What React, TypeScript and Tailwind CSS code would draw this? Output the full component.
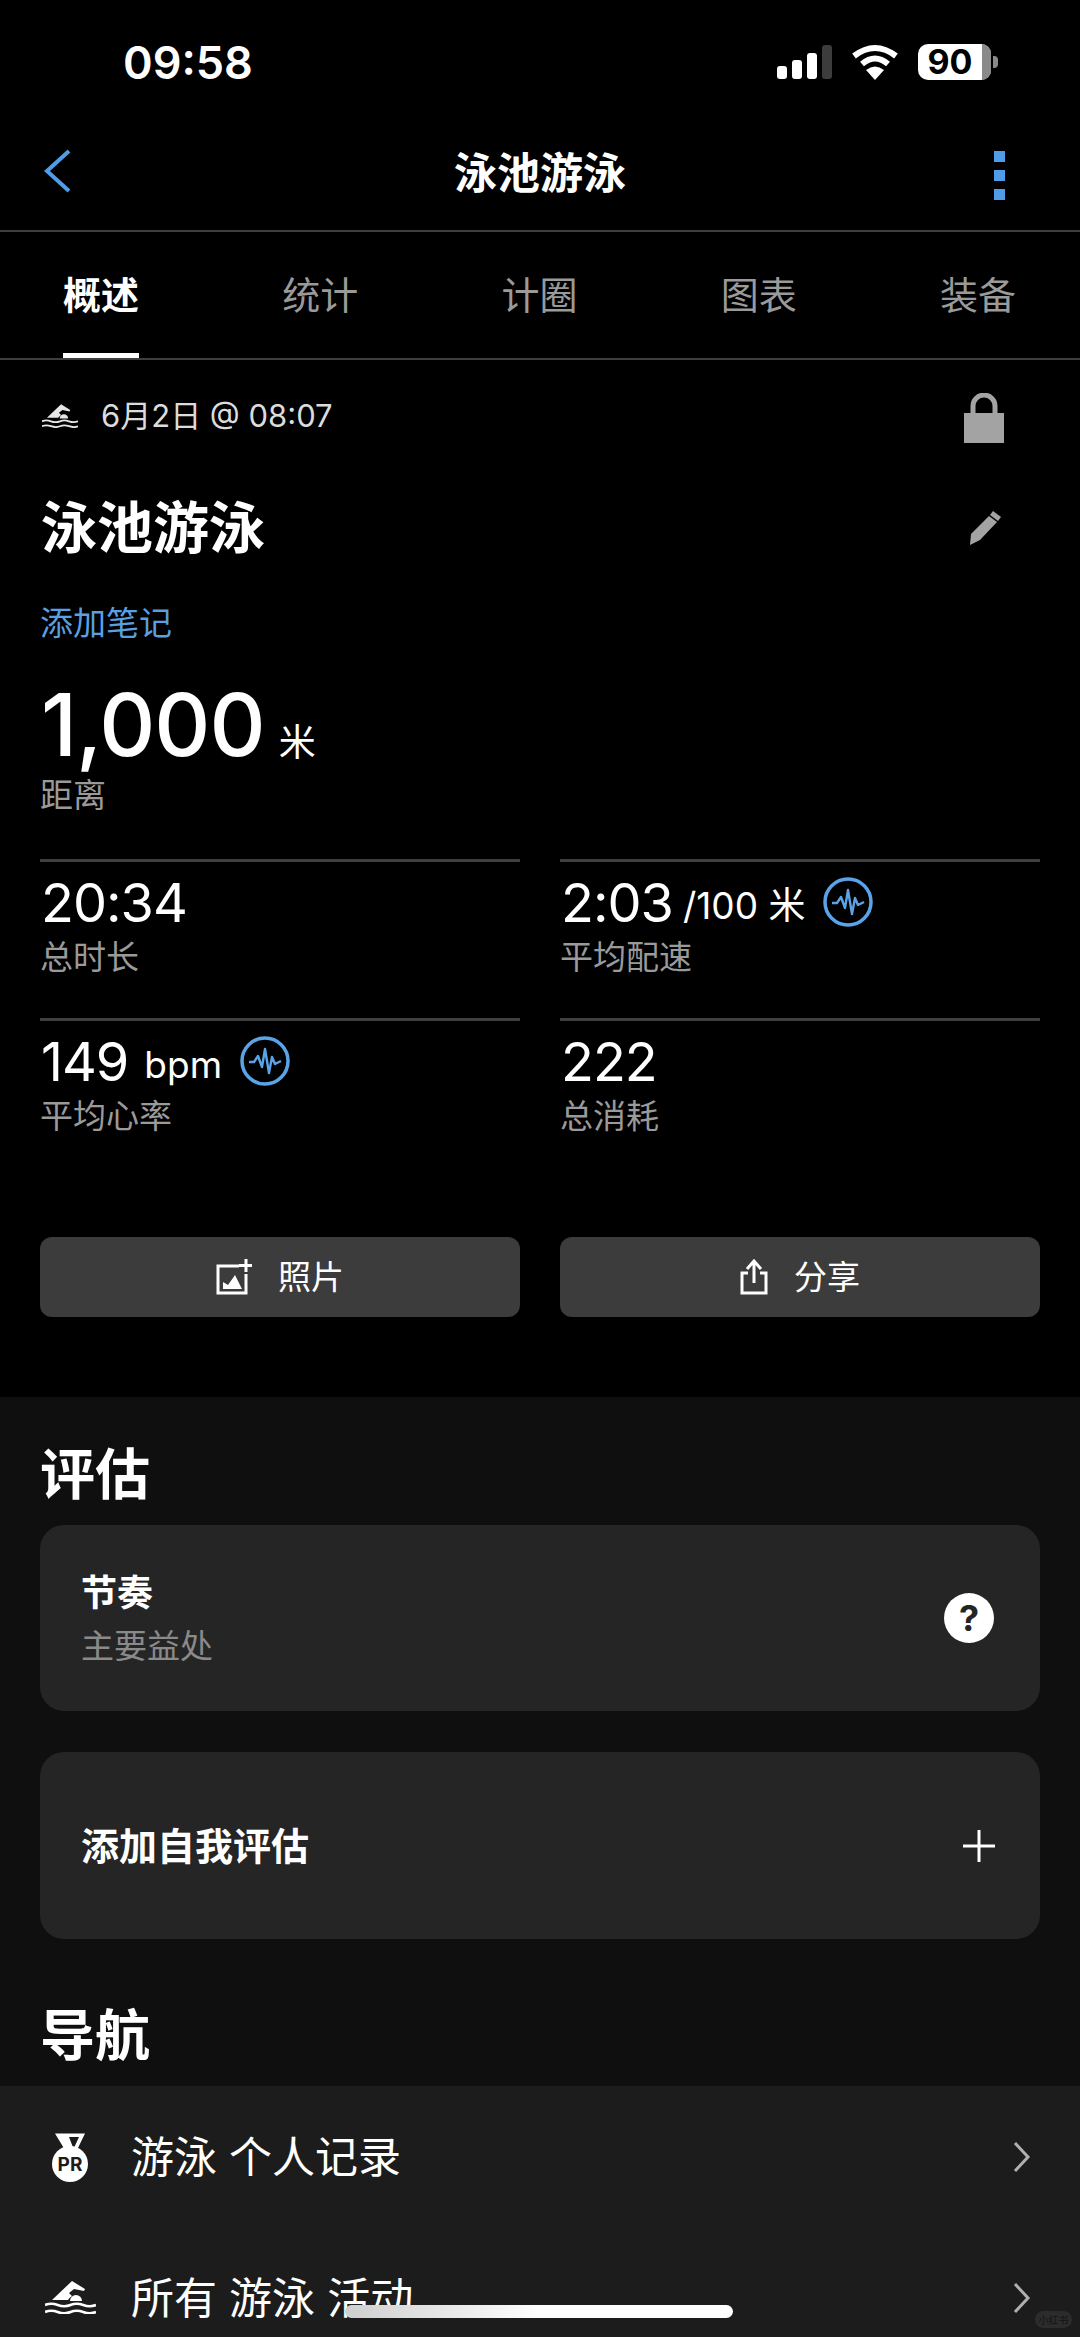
import { ReactNode } from "react"

const FONT = "font-['Inter','Noto_Sans_CJK_SC',sans-serif]"

function SwimIcon({ className }: { className: string }) {
    return (
        <svg viewBox="0 0 51 33" className={className} fill="white">
            <path d="M7 19 L27 0 L40 8 L39 10 L29 8 L24 12 L27 15 Q24 17 23 19 Z" />
            <path d="M25 20 a6 6 0 0 1 12 0 Z" />
            <path d="M0 24 q6 -2.5 12.75 0 t12.75 0 t12.75 0 t12.75 0 M0 31 q6 -2.5 12.75 0 t12.75 0 t12.75 0 t12.75 0" fill="none" stroke="white" strokeWidth="2.6" />
        </svg>
    )
}

function PulseIcon() {
    return (
        <svg viewBox="0 0 50 50" className="w-[50px] h-[50px] shrink-0" fill="none" stroke="#5ba3e8">
            <circle cx="25" cy="25" r="23" strokeWidth="3.5" />
            <path d="M9 26 L14 26 L18 20 L22 31 L25 13 L29 37 L32 21 L35 28 L41 25" strokeWidth="2.4" strokeLinejoin="round" />
        </svg>
    )
}

function Chevron() {
    return (
        <svg viewBox="0 0 20 32" className="w-[20px] h-[32px]" fill="none" stroke="#b0b0b0" strokeWidth="3">
            <path d="M3 2 L16 16 L3 30" />
        </svg>
    )
}

function Stat({ value, unit, unitGap, label, pulse }: { value: string; unit?: string; unitGap?: string; label: string; pulse?: boolean }) {
    return (
        <div className="h-[159px] border-t-[3px] border-[#3f3f3f] pt-[12px]">
            <div className="flex items-center h-[58px] pl-[1px]">
                <span className="text-[54px] leading-[58px] text-white tracking-[-1px]">{value}</span>
                {unit && <span className={`text-[37px] leading-[58px] text-white mt-[6px] ${unitGap ?? "ml-[10px]"}`}>{unit}</span>}
                {pulse && <span className="ml-[18px] -mt-[2px]"><PulseIcon /></span>}
            </div>
            <div className="text-[33px] leading-[40px] text-[#9a9a9a] mt-[5px]">{label}</div>
        </div>
    )
}

function ActionButton({ icon, label }: { icon: ReactNode; label: string }) {
    return (
        <div className="h-[80px] rounded-[12px] bg-[#3c3c3c] flex items-center justify-center gap-[26px] text-[33px] leading-none text-white">
            {icon}
            <span>{label}</span>
        </div>
    )
}

function NavRow({ icon, label }: { icon: ReactNode; label: string }) {
    return (
        <div className="h-[141px] flex items-center pr-[48px]">
            <div className="w-[131px] flex shrink-0">{icon}</div>
            <span className="flex-1 text-[43px] leading-[50px] text-white whitespace-pre">{label}</span>
            <Chevron />
        </div>
    )
}

export default function App() {
    const tabs = ["概述", "统计", "计圈", "图表", "装备"]

    return (
        <div className={`relative w-[1080px] h-[2337px] overflow-hidden bg-black ${FONT}`}>
            {/* Status bar */}
            <div className="h-[124px] flex items-center justify-between pl-[123px] pr-[82px]">
                <span className="text-[45px] leading-none font-semibold text-white">09:58</span>
                <div className="flex items-center">
                    <div className="flex items-end gap-[5px] h-[34px]">
                        <span className="w-[10px] h-[13px] rounded-[3px] bg-white" />
                        <span className="w-[10px] h-[19px] rounded-[3px] bg-white" />
                        <span className="w-[10px] h-[26px] rounded-[3px] bg-white" />
                        <span className="w-[10px] h-[34px] rounded-[3px] bg-[#3c3c3c]" />
                    </div>
                    <svg viewBox="0 0 48 36" className="w-[48px] h-[36px] ml-[19px]" fill="none" stroke="white" strokeWidth="6">
                        <path d="M3 12 Q24 -4 45 12" />
                        <path d="M11 20 Q24 9 37 20" />
                        <path d="M15 26 L24 36 L33 26 Q24 19 15 26 Z" fill="white" stroke="none" />
                    </svg>
                    <div className="relative ml-[19px] w-[73px] h-[36px] rounded-[10px] bg-white flex items-center justify-center pr-[9px] text-[34px] leading-[36px] font-bold text-black">
                        90
                        <span className="absolute right-0 top-0 w-[9px] h-full rounded-r-[10px] bg-[#8a8a8a]" />
                    </div>
                    <span className="ml-[2px] w-[5px] h-[12px] rounded-r-[4px] bg-[#8a8a8a]" />
                </div>
            </div>

            {/* Nav bar */}
            <div className="relative h-[108px] border-b-[2px] border-[#3f3f3f] flex items-center justify-center pb-[8px]">
                <svg viewBox="0 0 28 44" className="absolute left-[43px] top-[25px] w-[28px] h-[44px]" fill="none" stroke="#4f9de8" strokeWidth="4">
                    <path d="M26 2 L4 22 L26 42" />
                </svg>
                <span className="text-[43px] leading-[50px] font-semibold text-white">泳池游泳</span>
                <div className="absolute left-[994px] top-[27px] flex flex-col gap-[8px]">
                    <span className="w-[11px] h-[11px] bg-[#4f9de8]" />
                    <span className="w-[11px] h-[11px] bg-[#4f9de8]" />
                    <span className="w-[11px] h-[11px] bg-[#4f9de8]" />
                </div>
            </div>

            {/* Tabs */}
            <div className="h-[128px] border-b-[2px] border-[#3f3f3f] flex justify-between pl-[63px] pr-[64px]">
                {tabs.map((tab, i) => (
                    <div
                        key={tab}
                        className={`h-full flex items-center pt-[4px] border-b-[5px] text-[38px] leading-none ${
                            i === 0 ? "border-white text-white font-semibold" : "border-transparent text-[#9a9a9a]"
                        }`}
                    >
                        {tab}
                    </div>
                ))}
            </div>

            {/* Activity summary */}
            <div className="h-[1037px] px-[40px]">
                <div className="h-[116px] flex items-center justify-between">
                    <div className="flex items-center pb-[5px]">
                        <SwimIcon className="w-[36px] h-[24px] ml-[2px] opacity-90" />
                        <span className="ml-[23px] text-[31px] leading-none text-[#dcdcdc]">6月2日 @ 08:07</span>
                    </div>
                    <svg viewBox="0 0 40 50" className="w-[40px] h-[50px] mr-[36px]">
                        <path d="M9 24 V13 A11 11 0 0 1 31 13 V24" fill="none" stroke="#a3a3a3" strokeWidth="5" />
                        <rect y="20" width="40" height="30" fill="#a3a3a3" />
                    </svg>
                </div>
                <div className="h-[80px] mt-[12px] flex items-center justify-between">
                    <span className="ml-[1px] text-[56px] leading-[64px] font-bold text-white">泳池游泳</span>
                    <svg viewBox="0 0 34 36" className="w-[34px] h-[36px] mr-[38px]" fill="#a3a3a3">
                        <path d="M25 1 L33 7 L30 11 L22 5 Z" />
                        <path d="M21 6 L29 12 L12 30 L2 35 L3 24 Z" />
                    </svg>
                </div>
                <div className="mt-[35px] text-[33px] leading-[40px] text-[#5a9fe0]">添加笔记</div>
                <div className="mt-[38px] h-[88px] flex items-end">
                    <span className="ml-[1px] text-[87px] leading-[88px] font-medium text-white tracking-[-1px]">1,000</span>
                    <span className="ml-[14px] mb-[4px] text-[37px] leading-[44px] text-white">米</span>
                </div>
                <div className="text-[33px] leading-[40px] text-[#9a9a9a] mt-[6px]">距离</div>

                <div className="mt-[44px] grid grid-cols-2 gap-x-[40px]">
                    <Stat value="20:34" label="总时长" />
                    <Stat value="2:03" unit="/100 米" label="平均配速" pulse />
                    <Stat value="149" unit="bpm" unitGap="ml-[16px]" label="平均心率" pulse />
                    <Stat value="222" label="总消耗" />
                </div>

                <div className="mt-[60px] grid grid-cols-2 gap-x-[40px]">
                    <ActionButton
                        label="照片"
                        icon={
                            <svg viewBox="0 0 36 36" className="w-[36px] h-[36px]" fill="none" stroke="white" strokeWidth="3">
                                <path d="M23 7 H2 V34 H30 V15" />
                                <path d="M30 0 V13 M23 6.5 H36" />
                                <path d="M7 30 V23 L12 26 L19 16 L26 30 Z" fill="white" stroke="none" />
                            </svg>
                        }
                    />
                    <ActionButton
                        label="分享"
                        icon={
                            <svg viewBox="0 0 28 36" className="w-[28px] h-[36px]" fill="none" stroke="white" strokeWidth="3">
                                <path d="M8 14 H2 V34 H26 V14 H20" />
                                <path d="M14 24 V3 M7 10 L14 2 L21 10" />
                            </svg>
                        }
                    />
                </div>
            </div>

            {/* Lower panel */}
            <div className="h-[940px] bg-[#0f0f0f]">
                <div className="px-[40px]">
                    <div className="h-[128px] flex items-end pb-[19px] text-[55px] leading-[64px] font-bold text-white">评估</div>
                    <div className="h-[186px] rounded-[24px] bg-[#252525] flex items-center justify-between pl-[41px] pr-[46px]">
                        <div>
                            <div className="text-[36px] leading-[46px] font-semibold text-white">节奏</div>
                            <div className="text-[33px] leading-[40px] text-[#8a8a8a] mt-[10px]">主要益处</div>
                        </div>
                        <div className="w-[50px] h-[50px] rounded-full bg-white flex items-center justify-center text-[36px] leading-none font-bold text-[#252525]">?</div>
                    </div>
                    <div className="mt-[41px] h-[187px] rounded-[24px] bg-[#252525] flex items-center justify-between pl-[41px] pr-[45px]">
                        <span className="text-[38px] leading-[46px] font-semibold text-white">添加自我评估</span>
                        <svg viewBox="0 0 32 32" className="w-[32px] h-[32px]" stroke="white" strokeWidth="3">
                            <path d="M16 0 V32 M0 16 H32" />
                        </svg>
                    </div>
                    <div className="h-[147px] flex items-end pb-[19px] text-[55px] leading-[64px] font-bold text-white">导航</div>
                </div>
                <div className="bg-[#1c1c1c] h-[251px]">
                    <NavRow
                        label="游泳 个人记录"
                        icon={
                            <svg viewBox="0 0 36 50" className="w-[36px] h-[50px] ml-[52px]">
                                <path d="M3 1.5 H33 L25 18 H21 L27 5 H17 L22 18 H13 Z" fill="white" fillRule="evenodd" />
                                <circle cx="18" cy="32" r="18" fill="white" />
                                <text x="18" y="39" textAnchor="middle" fontSize="19" fontWeight="700" fill="#1c1c1c" fontFamily="Inter">PR</text>
                            </svg>
                        }
                    />
                    <NavRow label="所有 游泳 活动" icon={<SwimIcon className="w-[51px] h-[33px] ml-[45px]" />} />
                </div>
            </div>

            {/* Home indicator */}
            <div className="absolute left-[345px] top-[2305px] w-[388px] h-[13px] rounded-full bg-gradient-to-r from-[#cfcfcf] via-white to-white" />
            <div className="absolute left-[1035px] top-[2311px] w-[37px] h-[17px] rounded-full bg-[#2c2c2c] flex items-center justify-center text-[10px] leading-none text-[#141414]">小红书</div>
        </div>
    )
}
